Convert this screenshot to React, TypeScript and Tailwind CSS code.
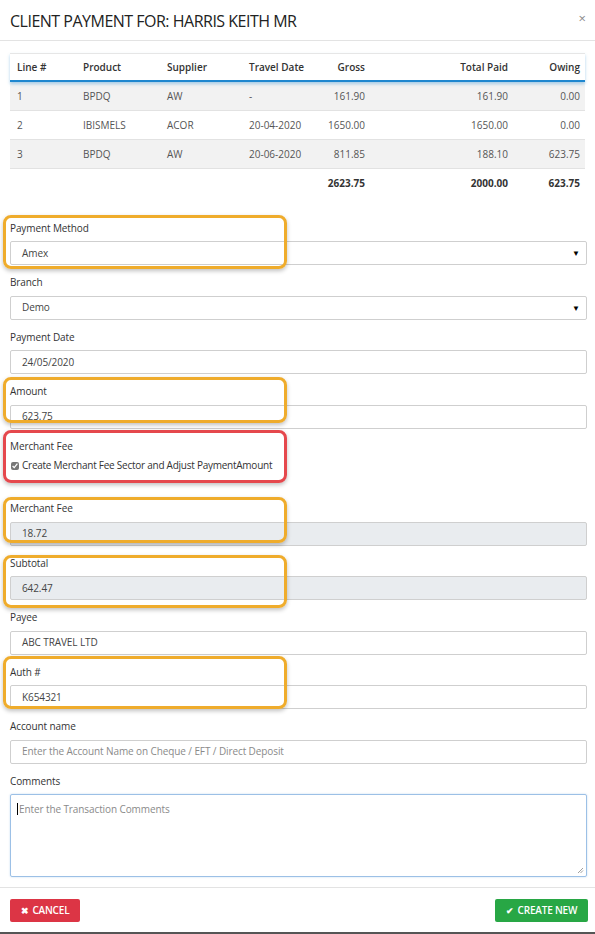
import React from "react";

const font = { fontFamily: "'Open Sans', 'Noto Sans', sans-serif" };

const rows = [
  ["1", "BPDQ", "AW", "-", "161.90", "161.90", "0.00"],
  ["2", "IBISMELS", "ACOR", "20-04-2020", "1650.00", "1650.00", "0.00"],
  ["3", "BPDQ", "AW", "20-06-2020", "811.85", "188.10", "623.75"],
];

const cols = "grid grid-cols-[66px_84px_82px_80px_50px_143px_72px]";

function Label({ children }: { children: React.ReactNode }) {
  return <div className="h-[13px] leading-[13px] text-[10px] text-[#333] mb-[6.5px] whitespace-nowrap tracking-[-0.1px]">{children}</div>;
}

function Field({
  label,
  value,
  placeholder,
  select,
  disabled,
}: {
  label: string;
  value?: string;
  placeholder?: string;
  select?: boolean;
  disabled?: boolean;
}) {
  return (
    <div className="mb-[11px]">
      <Label>{label}</Label>
      <div
        className={`h-[24px] border border-[#cfcfcf] rounded-[2px] flex items-center pl-[11px] pr-[6px] text-[10px] ${
          disabled ? "bg-[#e9ecef]" : "bg-white"
        }`}
      >
        <span className={`flex-1 tracking-[-0.1px] ${placeholder ? "text-[#8a8a8a]" : "text-[#444]"}`}>{value ?? placeholder}</span>
        {select && <span className="text-[8px] text-black leading-none">▼</span>}
      </div>
    </div>
  );
}

function Hl({ top, h, red }: { top: number; h: number; red?: boolean }) {
  return (
    <div
      className={`absolute left-[3px] w-[284px] rounded-[8px] border-[3px] pointer-events-none ${
        red ? "border-[#e5484d] shadow-[0_2px_4px_rgba(0,0,0,0.25)]" : "border-[#efac2c] shadow-[0_2px_4px_rgba(0,0,0,0.25)]"
      }`}
      style={{ top, height: h }}
    />
  );
}

export default function App() {
  return (
    <div className="relative w-[595px] h-[934px] bg-white border-b-2 border-[#555] overflow-hidden" style={font}>
      {/* Header */}
      <div className="h-[41px] border-b border-[#e3e3e3] flex items-center justify-between pl-[10px] pr-[9px]">
        <div className="text-[16px] text-[#222] tracking-[-0.5px] pt-[1px]">CLIENT PAYMENT FOR: HARRIS KEITH MR</div>
        <div className="text-[13px] text-[#8a8a8a] leading-none -mt-[4px]">×</div>
      </div>

      <div className="px-[10px] pt-[12px]">
        {/* Table */}
        <div className="text-[10px]">
          <div className={`${cols} h-[29px] items-center border-t border-[#e6e6e6] border-b-2 border-b-[#1f87cf] shadow-[0_2px_3px_rgba(31,135,207,0.35)] font-semibold text-[#333] relative`}>
            <div className="pl-[7px]">Line #</div>
            <div className="pl-[7px]">Product</div>
            <div className="pl-[7px]">Supplier</div>
            <div className="pl-[7px] whitespace-nowrap">Travel Date</div>
            <div className="pr-[7px] text-right">Gross</div>
            <div className="pr-[7px] text-right">Total Paid</div>
            <div className="pr-[7px] text-right">Owing</div>
          </div>
          {rows.map((r, i) => (
            <div
              key={i}
              className={`${cols} h-[29px] items-center border-b border-[#e2e2e2] text-[#555] ${i % 2 === 0 ? "bg-[#f2f2f2]" : "bg-white"}`}
            >
              <div className="pl-[7px]">{r[0]}</div>
              <div className="pl-[7px]">{r[1]}</div>
              <div className="pl-[7px]">{r[2]}</div>
              <div className="pl-[7px] whitespace-nowrap">{r[3]}</div>
              <div className="pr-[7px] text-right">{r[4]}</div>
              <div className="pr-[7px] text-right">{r[5]}</div>
              <div className="pr-[7px] text-right">{r[6]}</div>
            </div>
          ))}
          <div className={`${cols} h-[29px] items-center font-bold text-[#333]`}>
            <div />
            <div />
            <div />
            <div />
            <div className="pr-[7px] text-right">2623.75</div>
            <div className="pr-[7px] text-right">2000.00</div>
            <div className="pr-[7px] text-right">623.75</div>
          </div>
        </div>
      </div>

      {/* Form */}
      <div className="pl-[10px] pr-[8px] pt-[23.5px]">
        <Field label="Payment Method" value="Amex" select />
        <Field label="Branch" value="Demo" select />
        <Field label="Payment Date" value="24/05/2020" />
        <Field label="Amount" value="623.75" />
        <div className="mb-[30px]">
          <Label>Merchant Fee</Label>
          <div className="h-[13px] flex items-center gap-[3px] text-[10px] text-[#333]">
            <input type="checkbox" checked readOnly className="w-[8px] h-[8px] m-0 ml-[1px] accent-[#777]" />
            <span className="tracking-[-0.25px]">Create Merchant Fee Sector and Adjust PaymentAmount</span>
          </div>
        </div>
        <Field label="Merchant Fee" value="18.72" disabled />
        <Field label="Subtotal" value="642.47" disabled />
        <Field label="Payee" value="ABC TRAVEL LTD" />
        <Field label="Auth #" value="K654321" />
        <Field label="Account name" placeholder="Enter the Account Name on Cheque / EFT / Direct Deposit" />
        <div>
          <Label>Comments</Label>
          <div className="relative h-[83px] border border-[#9cc0e6] rounded-[2px] shadow-[0_0_2px_rgba(100,160,220,0.4)] pl-[6px] pt-[6px] text-[10px] text-[#8a8a8a]">
            <span className="inline-block w-[1px] h-[12px] bg-black align-middle mr-[1px]" />
            <span className="align-middle tracking-[-0.1px]">Enter the Transaction Comments</span>
            <svg className="absolute right-[2px] bottom-[2px]" width="7" height="7" viewBox="0 0 7 7">
              <path d="M6 1L1 6M6 3.5L3.5 6" stroke="#888" strokeWidth="0.8" />
            </svg>
          </div>
        </div>
      </div>

      {/* Footer */}
      <div className="absolute left-0 right-0 top-[887px] border-t border-[#e3e3e3] h-[45px] flex items-start justify-between pl-[10px] pr-[7px] pt-[11px]">
        <button className="h-[23px] w-[70px] bg-[#dc3545] rounded-[2px] text-white text-[10px] font-semibold flex items-center justify-center gap-[4px] tracking-[-0.2px]">
          <span className="text-[9px]">✖</span>CANCEL
        </button>
        <button className="h-[23px] w-[93px] bg-[#28a745] rounded-[2px] text-white text-[10px] font-semibold flex items-center justify-center gap-[4px] tracking-[-0.2px]">
          <span className="text-[9px]">✔</span>CREATE NEW
        </button>
      </div>

      {/* Highlights */}
      <Hl top={215} h={54} />
      <Hl top={377} h={46} />
      <Hl top={430} h={53} red />
      <Hl top={497} h={46} />
      <Hl top={555} h={53} />
      <Hl top={656} h={53} />
    </div>
  );
}
